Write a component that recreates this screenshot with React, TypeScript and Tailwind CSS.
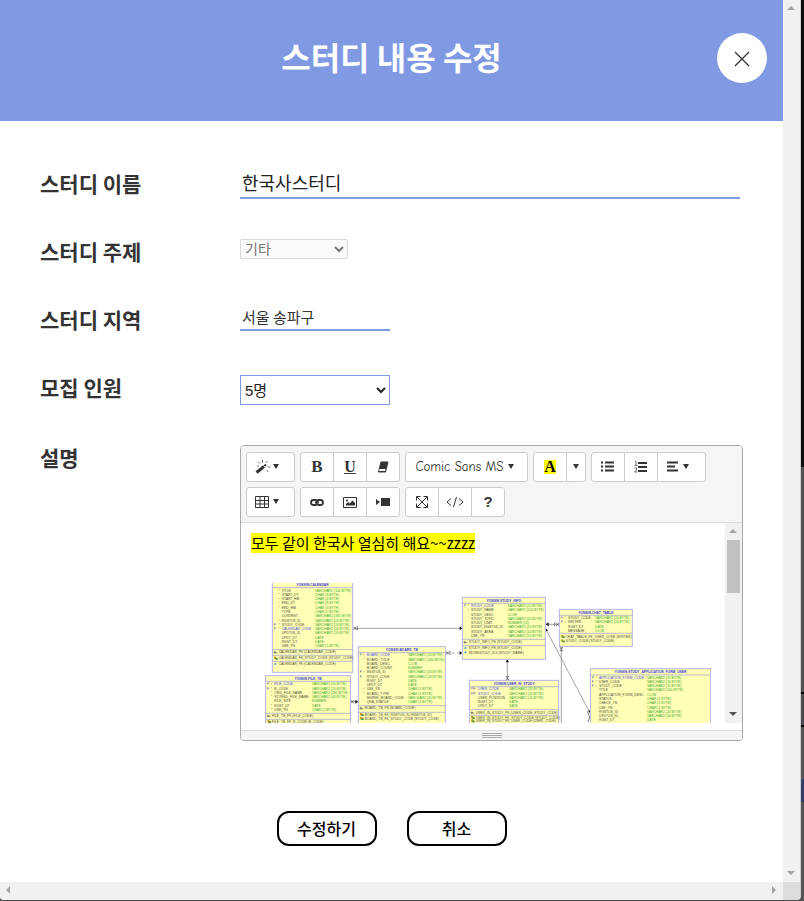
import React from "react";

type Row = [key: string, star: boolean, name: string, type: string];

type Entity = {
  title: string;
  x: number;
  y: number;
  w: number;
  h: number;
  rowsAt: number;
  nameX: number;
  typeX: number;
  rows: Row[];
  rules: number[];
  notes: [number, string, "key" | "fk" | "dot"][];
};

const entities: Entity[] = [
  {
    title: "YONSIN.CALENDAR", x: 67, y: 30, w: 241, h: 277, rowsAt: 65, nameX: 95, typeX: 195,
    rows: [
      ["", true, "TITLE", "VARCHAR2 (100 BYTE)"],
      ["", true, "START_DT", "CHAR (8 BYTE)"],
      ["", true, "START_HM", "CHAR (4 BYTE)"],
      ["", true, "END_DT", "CHAR (8 BYTE)"],
      ["", true, "END_HM", "CHAR (4 BYTE)"],
      ["", false, "TYPE", "CHAR (2 BYTE)"],
      ["", false, "CONTENT", "VARCHAR2 (300 BYTE)"],
      ["", true, "RGSTUS_ID", "VARCHAR2 (20 BYTE)"],
      ["F", true, "STUDY_CODE", "VARCHAR2 (20 BYTE)"],
      ["P", true, "CALENDAR_CODE", "VARCHAR2 (20 BYTE)"],
      ["", false, "UPDTUS_ID", "VARCHAR2 (20 BYTE)"],
      ["", false, "UPDT_DT", "DATE"],
      ["", false, "RGST_DT", "DATE"],
      ["", false, "USE_YN", "CHAR (1 BYTE)"],
    ],
    rules: [53, 239, 256, 274],
    notes: [
      [250, "CALENDAR_PK (CALENDAR_CODE)", "key"],
      [268, "CALENDAR_FK_STUDY_CODE (STUDY_CODE)", "fk"],
      [286, "CALENDAR_PK (CALENDAR_CODE)", "dot"],
    ],
  },
  {
    title: "YONSIN.FILE_TB", x: 47, y: 317, w: 254, h: 160, rowsAt: 346, nameX: 73, typeX: 186,
    rows: [
      ["P", true, "FILE_CODE", "VARCHAR2 (20 BYTE)"],
      ["F", true, "B_CODE", "VARCHAR2 (20 BYTE)"],
      ["", true, "ORG_FILE_NAME", "VARCHAR2 (200 BYTE)"],
      ["", true, "STORED_FILE_NAME", "VARCHAR2 (40 BYTE)"],
      ["", false, "FILE_SIZE", "NUMBER"],
      ["", true, "RGST_DT", "DATE"],
      ["", true, "USE_YN", "CHAR (1 BYTE)"],
    ],
    rules: [334, 430, 448],
    notes: [
      [441, "FILE_TB_PK (FILE_CODE)", "key"],
      [458, "FILE_TB_FK_B_CODE (B_CODE)", "fk"],
    ],
  },
  {
    title: "YONSIN.BOARD_TB", x: 325, y: 230, w: 261, h: 240, rowsAt: 259, nameX: 350, typeX: 474,
    rows: [
      ["P", true, "BOARD_CODE", "VARCHAR2 (20 BYTE)"],
      ["", true, "BOARD_TITLE", "VARCHAR2 (100 BYTE)"],
      ["", false, "BOARD_DESC", "CLOB"],
      ["", false, "BOARD_COUNT", "NUMBER"],
      ["F", true, "RGSTUS_ID", "VARCHAR2 (20 BYTE)"],
      ["F", false, "STUDY_CODE", "VARCHAR2 (20 BYTE)"],
      ["", false, "RGST_DT", "DATE"],
      ["", false, "UPDT_DT", "DATE"],
      ["", true, "USE_YN", "CHAR (1 BYTE)"],
      ["", true, "BOARD_TYPE", "CHAR (1 BYTE)"],
      ["", false, "HGRNK_BOARD_CODE", "VARCHAR2 (20 BYTE)"],
      ["", false, "QNA_STATUS", "CHAR (1 BYTE)"],
    ],
    rules: [248, 407, 427],
    notes: [
      [418, "BOARD_TB_PK (BOARD_CODE)", "key"],
      [437, "BOARD_TB_FK_RGSTUS_ID (RGSTUS_ID)", "fk"],
      [449, "BOARD_TB_FK_STUDY_CODE (STUDY_CODE)", "fk"],
    ],
  },
  {
    title: "YONSIN.STUDY_INFO", x: 637, y: 82, w: 249, h: 186, rowsAt: 111, nameX: 663, typeX: 773,
    rows: [
      ["P", true, "STUDY_CODE", "VARCHAR2 (20 BYTE)"],
      ["", true, "STUDY_NAME", "VARCHAR2 (100 BYTE)"],
      ["", false, "STUDY_DESC", "CLOB"],
      ["", false, "STUDY_TOPIC", "VARCHAR2 (20 BYTE)"],
      ["", false, "STUDY_LIMIT", "NUMBER (10)"],
      ["", false, "STUDY_RGSTUS_ID", "VARCHAR2 (20 BYTE)"],
      ["", false, "STUDY_AREA", "VARCHAR2 (20 BYTE)"],
      ["", false, "USE_YN", "VARCHAR2 (20 BYTE)"],
    ],
    rules: [100, 208, 227],
    notes: [
      [220, "STUDY_INFO_PK (STUDY_CODE)", "key"],
      [238, "STUDY_INFO_PK (STUDY_CODE)", "dot"],
      [251, "WORKSTUDY_IDX (STUDY_NAME)", "dot"],
    ],
  },
  {
    title: "YONSIN.CHAT_TABLE", x: 928, y: 118, w: 219, h: 111, rowsAt: 147, nameX: 954, typeX: 1035,
    rows: [
      ["F", true, "STUDY_CODE", "VARCHAR2 (20 BYTE)"],
      ["F", true, "WRITER", "VARCHAR2 (20 BYTE)"],
      ["", false, "RGST_DT", "DATE"],
      ["", false, "MESSAGE", "CLOB"],
    ],
    rules: [136, 190],
    notes: [
      [203, "CHAT_TABLE_FK_USER_CODE (WRITER)", "fk"],
      [216, "STUDY_CODE (STUDY_CODE)", "fk"],
    ],
  },
  {
    title: "YONSIN.USER_IN_STUDY", x: 658, y: 331, w: 268, h: 150, rowsAt: 361, nameX: 684, typeX: 777,
    rows: [
      ["PF", true, "USER_CODE", "VARCHAR2 (20 BYTE)"],
      ["PF", true, "STUDY_CODE", "VARCHAR2 (20 BYTE)"],
      ["", false, "USER_POSITION", "VARCHAR2 (20 BYTE)"],
      ["", false, "RGST_DT", "DATE"],
      ["", false, "UPDT_DT", "DATE"],
    ],
    rules: [350, 419, 436],
    notes: [
      [431, "USER_IN_STUDY_PK (USER_CODE, STUDY_CODE)", "key"],
      [446, "USER_IN_STUDY_FK_STUDY_CODE (STUDY_CODE)", "fk"],
      [456, "USER_IN_STUDY_FK_USER_CODE (USER_CODE)", "fk"],
    ],
  },
  {
    title: "YONSIN.STUDY_APPLICATION_FORM_USER", x: 1021, y: 296, w: 361, h: 180, rowsAt: 326, nameX: 1047, typeX: 1191,
    rows: [
      ["P", true, "APPLICATION_FORM_CODE", "VARCHAR2 (20 BYTE)"],
      ["F", true, "USER_CODE", "VARCHAR2 (20 BYTE)"],
      ["F", true, "STUDY_CODE", "VARCHAR2 (20 BYTE)"],
      ["", false, "TITLE", "VARCHAR2 (100 BYTE)"],
      ["", false, "APPLICATION_FORM_DESC", "CLOB"],
      ["", false, "STATUS", "CHAR (2 BYTE)"],
      ["", false, "CHECK_YN", "CHAR (1 BYTE)"],
      ["", false, "USE_YN", "CHAR (1 BYTE)"],
      ["", false, "RGSTUS_ID", "VARCHAR2 (20 BYTE)"],
      ["", false, "UPDTUS_ID", "VARCHAR2 (20 BYTE)"],
      ["", false, "RGST_DT", "DATE"],
    ],
    rules: [315],
    notes: [],
  },
];

function EntityBox({ e }: { e: Entity }) {
  return (
    <g>
      <rect x={e.x} y={e.y} width={e.w} height={e.h} fill="#ffffb5" stroke="#b3b3ee" strokeWidth="3" />
      {e.rules.map((y) => (
        <path key={y} d={`M${e.x} ${y}h${e.w}`} stroke="#9a9ad8" strokeWidth="2" />
      ))}
      <text x={e.x + e.w / 2} y={e.rules[0] - 5} textAnchor="middle" fontWeight="bold" fill="#3a3ae0">
        {e.title}
      </text>
      {e.rows.map(([key, star, name, type], i) => {
        const y = Math.round(e.rowsAt + i * 12.8);
        return (
          <g key={name}>
            {key && <text x={e.x + 4} y={y} fill="#5555aa">{key}</text>}
            {star && <text x={e.nameX - 10} y={y + 1} fill="#ff3030">*</text>}
            <text x={e.nameX} y={y} fill={key.startsWith("P") ? "#4a4ae0" : "#4c4c3c"}>{name}</text>
            <text x={e.typeX} y={y} fill="#3cab2c">{type}</text>
          </g>
        );
      })}
      {e.notes.map(([y, label, kind], i) => (
        <g key={i}>
          {kind === "fk" && (
            <>
              <rect x={e.x + 5} y={y - 8} width="7" height="7" fill="#d0a020" />
              <rect x={e.x + 9} y={y - 4} width="7" height="5" fill="#3c8c3c" />
            </>
          )}
          {kind === "key" && <path d={`M${e.x + 5} ${y - 5}h4v4h-4zM${e.x + 9} ${y - 2}h6`} stroke="#555" strokeWidth="2" fill="none" />}
          {kind === "dot" && <path d={`M${e.x + 9} ${y - 8}l4 4-4 4-4-4z`} fill="#58a8c0" />}
          <text x={e.x + 19} y={y} fill="#4c4c3c">{label}</text>
        </g>
      ))}
    </g>
  );
}

function Diagram() {
  return (
    <svg
      viewBox="3 39 1380 420"
      className="mt-[30px] block w-[460px] shrink-0 font-['Liberation_Sans',Arial,sans-serif]"
      fontSize="10"
      role="img"
      aria-label="ERD"
    >
      <g stroke="#777" strokeWidth="2" fill="none">
        <path d="M310 175H637M886 163h42M772 268v63M934 229v240M886 175l135 255M301 395h24" />
        <path d="M586 249h51" strokeDasharray="9 9" />
        <path d="M310 170l10 10M310 180l10-10M322 169v12M588 244l10 10M588 254l10-10M600 243v12M918 158l10 10M918 168l10-10M914 157v12M767 331l5-8 5 8M767 320h10M929 229l5 10 5-10M929 242h10M303 390l8 10M303 400l8-10M1012 424l8 20M1021 440l-8 16" stroke="#444" />
      </g>
      <path d="M637 175l-8-6v12zM637 249l-8-6v12zM887 163l9-6v12zM772 268l-5 9h10zM886 175l1 10 7-4zM325 395l-9-6v12zM1021 430l-7-7 7-3z" fill="#111" />
      {entities.map((e) => (
        <EntityBox key={e.title} e={e} />
      ))}
    </svg>
  );
}

function Icon({ children, w = 16 }: { children: React.ReactNode; w?: number }) {
  return (
    <svg viewBox={`0 0 ${w} 14`} width={w} height="14" fill="none" stroke="#333" strokeWidth="1" aria-hidden="true" className="shrink-0">
      {children}
    </svg>
  );
}

function Caret() {
  return (
    <svg viewBox="0 0 6 6" width="6" height="6" fill="#333" aria-hidden="true" className="shrink-0">
      <path d="M0 0h6L3 5z" />
    </svg>
  );
}

function Group({ children }: { children: React.ReactNode }) {
  return (
    <div className="flex h-[30px] divide-x divide-[#ccc] overflow-hidden rounded-[3px] border border-[#ccc] bg-white text-[#333]">
      {children}
    </div>
  );
}

function Tool({ label, children, size = "w-[33px]" }: { label: string; children: React.ReactNode; size?: string }) {
  return (
    <button type="button" aria-label={label} className={`flex items-center justify-center ${size}`}>
      {children}
    </button>
  );
}

function Toolbar() {
  return (
    <div className="flex flex-wrap gap-[5px] border-b border-[#ddd] bg-[#f5f5f5] px-[5px] pt-[6px] pb-[5px]">
      <Group>
        <Tool label="스타일" size="w-[47px] gap-0.5 pr-2">
          <Icon>
            <path d="M1.500 12.500L9 6.500" strokeWidth="3" />
            <path d="M9.500 6l1.500-1.500" strokeWidth="2" />
            <path d="M7.500 0v3M3 1.500l2 2M12.500 1l-2 2M12.500 7h3M11.500 10l1.500 2M2 6h2" stroke="#777" />
          </Icon>
          <Caret />
        </Tool>
      </Group>
      <Group>
        <Tool label="굵게">
          <span className="font-['Liberation_Serif',serif] text-[17px] leading-5 font-bold">B</span>
        </Tool>
        <Tool label="밑줄">
          <span className="font-['Liberation_Serif',serif] text-base leading-5 font-bold underline">U</span>
        </Tool>
        <Tool label="서식 지우기" size="w-8">
          <Icon w={12}>
            <path d="M4 2h7L8.500 12h-7z" fill="#333" />
            <path d="M2.500 9h6l-.5 2H2z" fill="#fff" stroke="none" />
          </Icon>
        </Tool>
      </Group>
      <Group>
        <Tool label="글꼴" size="w-[121px] gap-1 pr-1">
          <span className="font-['Comic_Sans_MS','Comic_Neue',Lato,sans-serif] text-[13px]">Comic Sans MS</span>
          <Caret />
        </Tool>
      </Group>
      <Group>
        <Tool label="글자색">
          <span className="bg-[#ff0] font-['Liberation_Serif',serif] text-base leading-[14px] font-bold text-black">A</span>
        </Tool>
        <Tool label="색상 더보기" size="w-[18px]">
          <Caret />
        </Tool>
      </Group>
      <Group>
        <Tool label="글머리 기호">
          <Icon w={14}>
            <path d="M4 2.500h9M4 6.500h9M4 10.500h9" strokeWidth="2" />
            <path d="M0 2.500h2M0 6.500h2M0 10.500h2" strokeWidth="2" />
          </Icon>
        </Tool>
        <Tool label="번호 매기기">
          <Icon w={14}>
            <path d="M4 3h9M4 7h9M4 11h9" strokeWidth="2" />
            <path d="M1 1.500h1v4M.5 5.500h3M.5 8h2v2l-2 2h2.500" stroke="#666" />
          </Icon>
        </Tool>
        <Tool label="정렬" size="w-[47px] gap-1 pr-2">
          <Icon w={12}>
            <path d="M0 2.500h11M0 6.500h8M0 10.500h11" strokeWidth="2" />
          </Icon>
          <Caret />
        </Tool>
      </Group>
      <Group>
        <Tool label="표" size="w-[47px] gap-1 pr-2">
          <Icon w={14}>
            <path d="M.5 1.500h13v11H.5zM.5 5.500h13M.5 9h13M5 1.500v11M9.500 1.500v11" />
          </Icon>
          <Caret />
        </Tool>
      </Group>
      <Group>
        <Tool label="링크">
          <Icon w={14}>
            <path d="M6.500 10H3.500a2.500 2.500 0 010-5h2Q7 5 7.500 6.500M7.500 5h3a2.500 2.500 0 010 5h-2Q7 10 6.500 8.500M5 7.500h4" strokeWidth="1.800" />
          </Icon>
        </Tool>
        <Tool label="사진">
          <Icon w={14}>
            <path d="M.5 2.500h13v10H.5z" />
            <path d="M3 10.500V9l2-2 1.500 1.500 3-3L12 8v2.500z" fill="#333" stroke="none" />
            <circle cx="4" cy="5.500" r="1" fill="#333" stroke="none" />
          </Icon>
        </Tool>
        <Tool label="동영상" size="w-8">
          <Icon w={14}>
            <path d="M5 3h9v8H5zM0 4l4 3-4 3z" fill="#333" stroke="none" />
          </Icon>
        </Tool>
      </Group>
      <Group>
        <Tool label="전체 화면">
          <Icon w={12}>
            <path d="M1 2l10 10M11 2L1 12" />
            <path d="M.5 5.500v-4h4M7.500 1.500h4v4M11.500 8.500v4h-4M4.500 12.500h-4v-4" />
          </Icon>
        </Tool>
        <Tool label="코드 보기">
          <Icon w={18}>
            <path d="M5 3.500L1 7l4 3.500M13 3.500L17 7l-4 3.500M10.500 2l-3 10" />
          </Icon>
        </Tool>
        <Tool label="도움말" size="w-8">
          <span className="font-['Liberation_Sans',Arial,sans-serif] text-[15px] font-bold">?</span>
        </Tool>
      </Group>
    </div>
  );
}

function Editor() {
  return (
    <div className="mt-1 flex flex-1 flex-col overflow-hidden rounded-[4px] border border-[#a9a9a9] bg-white">
      <Toolbar />
      <div className="flex h-[200px]">
        <div className="min-w-0 flex-1 overflow-hidden px-2.5 pt-2.5 text-black">
          <p className="text-[15px] leading-5">
            <span className="inline-block bg-[#ff0] leading-5">모두 같이 한국사 열심히 해요~~zzzz</span>
          </p>
          <Diagram />
        </div>
        <div className="flex w-[17px] flex-col items-center bg-[#f1f1f1]">
          <Arrow d="M4 10h8L8 6z" color="#a3a3a3" />
          <div className="h-[53px] w-[13px] bg-[#c1c1c1]" />
          <div className="flex-1" />
          <Arrow d="M4 6h8l-4 4z" color="#505050" />
        </div>
      </div>
      <div className="mt-[7px] flex h-2.5 flex-col items-center gap-px border-t border-[#ddd] bg-[#f5f5f5] pt-0.5">
        <div className="h-px w-5 bg-[#a9a9a9]" />
        <div className="h-px w-5 bg-[#a9a9a9]" />
        <div className="h-px w-5 bg-[#a9a9a9]" />
      </div>
    </div>
  );
}

function Arrow({ d, color }: { d: string; color: string }) {
  return (
    <svg viewBox="0 0 17 17" width="17" height="17" fill={color} aria-hidden="true" className="shrink-0">
      <path d={d} />
    </svg>
  );
}

const labelStyle = "w-[200px] shrink-0 text-[21px] leading-8 font-bold text-[#333]";
const rowStyle = "flex h-[68px] items-start";
const selectFont = "font-['Liberation_Sans','Noto_Sans_CJK_KR',sans-serif]";
const buttonStyle = "h-[35px] w-[100px] rounded-[12px] border-2 border-black bg-white pb-0.5";

export default function App() {
  return (
    <div className="flex min-h-screen bg-[#4c4c4c] pb-px font-['Noto_Sans_CJK_KR',sans-serif]">
      <div className="flex min-w-0 flex-1 flex-col overflow-hidden rounded-b-[4px] border-r border-[#d0d0d0] bg-white">
        <div className="flex flex-1">
          <div className="flex min-w-0 flex-1 flex-col">
            <header className="grid h-[121px] grid-cols-[1fr_auto_1fr] items-center bg-[#7f99e3] px-4 pb-[5px]">
              <h1 className="col-start-2 pb-1 text-[32px] leading-10 font-bold text-white">스터디 내용 수정</h1>
              <button type="button" aria-label="닫기" className="flex size-[50px] items-center justify-center justify-self-end rounded-full bg-white">
                <svg viewBox="0 0 16 16" width="16" height="16" stroke="#333" strokeWidth="1.300" aria-hidden="true" className="mt-0.5">
                  <path d="M1 1l14 14M15 1L1 15" />
                </svg>
              </button>
            </header>
            <form className="flex flex-1 flex-col px-10 pt-[46px] pb-9">
              <div className={rowStyle}>
                <label htmlFor="name" className={labelStyle}>스터디 이름</label>
                <input id="name" defaultValue="한국사스터디" className="h-8 w-[500px] min-w-0 border-b-2 border-[#7f99e3] px-0.5 text-[18px] text-[#222] outline-none" />
              </div>
              <div className={rowStyle}>
                <label htmlFor="topic" className={labelStyle}>스터디 주제</label>
                <select id="topic" disabled className={`mt-1 h-5 w-[108px] rounded-[2px] border border-[#d9d9d9] bg-[#fafafa] text-[14px] text-[#777] ${selectFont}`}>
                  <option>기타</option>
                </select>
              </div>
              <div className={rowStyle}>
                <label htmlFor="area" className={labelStyle}>스터디 지역</label>
                <input id="area" defaultValue="서울 송파구" className="h-7 w-[150px] border-b-2 border-[#7f99e3] px-0.5 text-[15px] text-[#333] outline-none" />
              </div>
              <div className={rowStyle}>
                <label htmlFor="limit" className={labelStyle}>모집 인원</label>
                <select id="limit" className={`mt-1 h-[30px] w-[150px] border border-[#7f99e3] bg-white text-[15px] text-[#222] ${selectFont}`}>
                  <option>5명</option>
                </select>
              </div>
              <div className="mt-0.5 flex items-start">
                <span className={labelStyle}>설명</span>
                <Editor />
              </div>
              <div className="mt-[70px] flex justify-center gap-[30px] text-[16px] leading-5 font-medium text-black">
                <button type="submit" className={buttonStyle}>수정하기</button>
                <button type="button" className={buttonStyle}>취소</button>
              </div>
            </form>
          </div>
          <div className="flex w-[17px] shrink-0 flex-col justify-between bg-[#f1f1f1]">
            <Arrow d="M4 10h8L8 6z" color="#a3a3a3" />
            <Arrow d="M4 6h8l-4 4z" color="#a3a3a3" />
          </div>
        </div>
        <div className="flex h-[18px] shrink-0 bg-[#f1f1f1]">
          <div className="flex flex-1 justify-between">
            <Arrow d="M10 4v8L6 8z" color="#a3a3a3" />
            <Arrow d="M6 4v8l4-4z" color="#a3a3a3" />
          </div>
          <div className="w-[17px] bg-[#dcdcdc]" />
        </div>
      </div>
      <div className="flex w-[3px] shrink-0 flex-col">
        <div className="h-[467px] bg-[#0c0c0c]" />
        <div className="h-[225px] bg-[#525252]" />
        <div className="h-0.5 bg-black" />
        <div className="h-[31px] bg-[#4a4c50]" />
        <div className="h-0.5 bg-black" />
        <div className="h-[52px] bg-[#555]" />
        <div className="h-[23px] bg-[#333f6b]" />
        <div className="flex-1 bg-[#555]" />
      </div>
    </div>
  );
}
